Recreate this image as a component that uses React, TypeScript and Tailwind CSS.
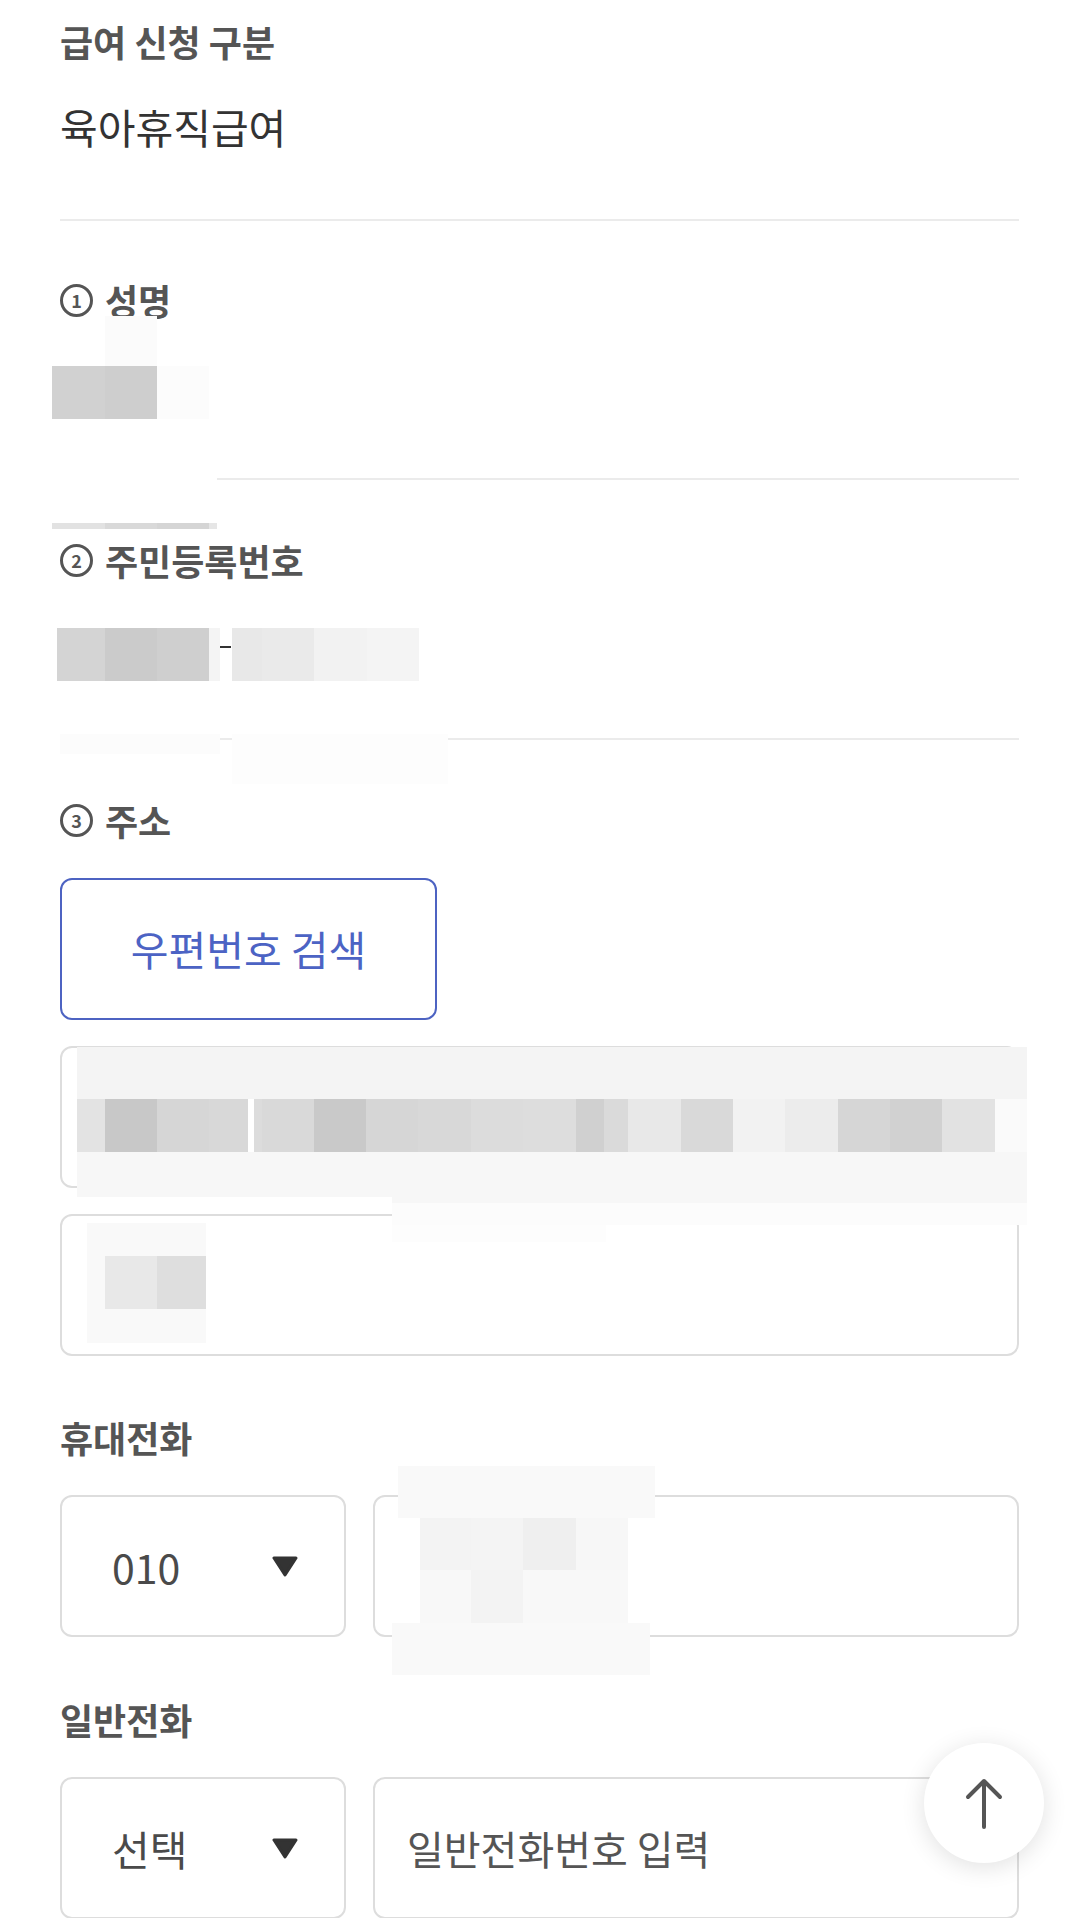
import React from "react";

const labelClass = "text-[36px] leading-[46px] font-bold text-[#555]";
const boxClass = "h-[142px] rounded-[12px] border-2 border-[#dddddd] bg-white";

// privacy mosaic laid over the filled-in values
const masks = [
	// 성명
	"left-[105px] top-[316px] w-[52px] h-[50px] bg-[#fbfbfb]",
	"left-[52px] top-[366px] w-[53px] h-[53px] bg-[#d1d1d1]",
	"left-[105px] top-[366px] w-[52px] h-[53px] bg-[#cecece]",
	"left-[157px] top-[366px] w-[52px] h-[53px] bg-[#fcfcfc]",
	"left-[52px] top-[468px] w-[165px] h-[52px] bg-white",
	"left-[52px] top-[523px] w-[53px] h-[6px] bg-[#e2e2e2]",
	"left-[105px] top-[523px] w-[52px] h-[6px] bg-[#d9d9d9]",
	"left-[157px] top-[523px] w-[52px] h-[6px] bg-[#d5d5d5]",
	"left-[209px] top-[523px] w-[8px] h-[6px] bg-[#e6e6e6]",
	// 주민등록번호
	"left-[57px] top-[628px] w-[48px] h-[53px] bg-[#d4d4d4]",
	"left-[105px] top-[628px] w-[52px] h-[53px] bg-[#cbcbcb]",
	"left-[157px] top-[628px] w-[52px] h-[53px] bg-[#cfcfcf]",
	"left-[209px] top-[628px] w-[11px] h-[53px] bg-[#f4f4f4]",
	"left-[220px] top-[646px] w-[11px] h-[2px] bg-[#333]",
	"left-[232px] top-[628px] w-[30px] h-[53px] bg-[#e8e8e8]",
	"left-[262px] top-[628px] w-[52px] h-[53px] bg-[#eaeaea]",
	"left-[314px] top-[628px] w-[53px] h-[53px] bg-[#f2f2f2]",
	"left-[367px] top-[628px] w-[52px] h-[53px] bg-[#f4f4f4]",
	"left-[60px] top-[734px] w-[160px] h-[20px] bg-[#fcfcfc]",
	"left-[232px] top-[734px] w-[216px] h-[50px] bg-[#fdfdfd]",
	// 주소 1
	"left-[77px] top-[1047px] w-[950px] h-[52px] bg-[#f4f4f4]",
	"left-[77px] top-[1099px] w-[28px] h-[53px] bg-[#e3e3e3]",
	"left-[105px] top-[1099px] w-[52px] h-[53px] bg-[#c8c8c8]",
	"left-[157px] top-[1099px] w-[52px] h-[53px] bg-[#d6d6d6]",
	"left-[209px] top-[1099px] w-[39px] h-[53px] bg-[#d8d8d8]",
	"left-[248px] top-[1099px] w-[6px] h-[53px] bg-white",
	"left-[254px] top-[1099px] w-[8px] h-[53px] bg-[#dcdcdc]",
	"left-[262px] top-[1099px] w-[52px] h-[53px] bg-[#d9d9d9]",
	"left-[314px] top-[1099px] w-[52px] h-[53px] bg-[#c9c9c9]",
	"left-[366px] top-[1099px] w-[52px] h-[53px] bg-[#d6d6d6]",
	"left-[418px] top-[1099px] w-[53px] h-[53px] bg-[#d8d8d8]",
	"left-[471px] top-[1099px] w-[52px] h-[53px] bg-[#dcdcdc]",
	"left-[523px] top-[1099px] w-[53px] h-[53px] bg-[#dddddd]",
	"left-[576px] top-[1099px] w-[28px] h-[53px] bg-[#d0d0d0]",
	"left-[604px] top-[1099px] w-[24px] h-[53px] bg-[#dadada]",
	"left-[628px] top-[1099px] w-[53px] h-[53px] bg-[#e8e8e8]",
	"left-[681px] top-[1099px] w-[52px] h-[53px] bg-[#d9d9d9]",
	"left-[733px] top-[1099px] w-[52px] h-[53px] bg-[#f2f2f2]",
	"left-[785px] top-[1099px] w-[53px] h-[53px] bg-[#ececec]",
	"left-[838px] top-[1099px] w-[52px] h-[53px] bg-[#d6d6d6]",
	"left-[890px] top-[1099px] w-[52px] h-[53px] bg-[#d1d1d1]",
	"left-[942px] top-[1099px] w-[53px] h-[53px] bg-[#e2e2e2]",
	"left-[995px] top-[1099px] w-[32px] h-[53px] bg-[#fafafa]",
	"left-[77px] top-[1152px] w-[950px] h-[45px] bg-[#f7f7f7]",
	"left-[392px] top-[1197px] w-[635px] h-[6px] bg-[#f7f7f7]",
	"left-[392px] top-[1203px] w-[635px] h-[22px] bg-[#fcfcfc]",
	"left-[392px] top-[1225px] w-[214px] h-[17px] bg-[#fdfdfd]",
	// 주소 2
	"left-[87px] top-[1223px] w-[119px] h-[120px] bg-[#f9f9f9]",
	"left-[105px] top-[1256px] w-[52px] h-[53px] bg-[#e8e8e8]",
	"left-[157px] top-[1256px] w-[49px] h-[53px] bg-[#dedede]",
	// 휴대전화
	"left-[398px] top-[1466px] w-[257px] h-[52px] bg-[#f9f9f9]",
	"left-[420px] top-[1518px] w-[51px] h-[52px] bg-[#f3f3f3]",
	"left-[471px] top-[1518px] w-[52px] h-[52px] bg-[#f4f4f4]",
	"left-[523px] top-[1518px] w-[53px] h-[52px] bg-[#efefef]",
	"left-[576px] top-[1518px] w-[52px] h-[52px] bg-[#f7f7f7]",
	"left-[420px] top-[1570px] w-[51px] h-[53px] bg-[#f8f8f8]",
	"left-[471px] top-[1570px] w-[52px] h-[53px] bg-[#f3f3f3]",
	"left-[523px] top-[1570px] w-[105px] h-[53px] bg-[#f8f8f8]",
	"left-[392px] top-[1623px] w-[258px] h-[52px] bg-[#f9f9f9]",
];

const Num = ({ n }: { n: number }) => (
	<span className="mr-[12px] inline-flex h-[33px] w-[33px] shrink-0 items-center justify-center rounded-full border-[3px] border-[#555] text-[18px] font-bold leading-none text-[#555]">
		{n}
	</span>
);

const Caret = () => (
	<svg width="26" height="21" viewBox="0 0 26 21">
		<polygon
			points="2,2 24,2 13,19"
			fill="#333"
			stroke="#333"
			strokeWidth="3"
			strokeLinejoin="round"
		/>
	</svg>
);

const PhoneRow = ({
	prefix,
	value,
}: {
	prefix: string;
	value?: string;
}) => (
	<div className="mt-[35px] flex gap-[27px]">
		<div
			className={`${boxClass} flex w-[286px] shrink-0 items-center justify-between pl-[50px] pr-[46px]`}
		>
			<span className="text-[41px] leading-none text-[#4a4a4a]">{prefix}</span>
			<Caret />
		</div>
		<div className={`${boxClass} flex flex-1 items-center pl-[32px]`}>
			{value && (
				<span className="text-[40px] leading-none text-[#555]">{value}</span>
			)}
		</div>
	</div>
);

export default function App() {
	return (
		<div className="relative h-[1918px] overflow-hidden bg-white font-['Noto_Sans_CJK_KR','Noto_Sans',sans-serif]">
			<div className="px-[60px] pt-[18px]">
				<p className={labelClass}>급여 신청 구분</p>
				<p className="mt-[36px] text-[41px] leading-[52px] text-[#333]">
					육아휴직급여
				</p>
				<div className="mt-[67px] h-[2px] bg-[#ebebeb]" />

				<p className={`${labelClass} mt-[56px] flex items-center`}>
					<Num n={1} />
					성명
				</p>
				<div className="mt-[44px] h-[52px]" />
				<div className="mt-[59px] h-[2px] bg-[#ebebeb]" />

				<p className={`${labelClass} mt-[57px] flex items-center`}>
					<Num n={2} />
					주민등록번호
				</p>
				<div className="mt-[45px] h-[52px]" />
				<div className="mt-[58px] h-[2px] bg-[#ebebeb]" />

				<p className={`${labelClass} mt-[57px] flex items-center`}>
					<Num n={3} />
					주소
				</p>
				<button className="mt-[35px] flex h-[142px] w-[377px] items-center justify-center rounded-[12px] border-2 border-[#4d63c2] bg-white text-[41px] text-[#4c63c4]">
					우편번호 검색
				</button>
				<div className={`${boxClass} mt-[26px] bg-[#f6f6f6]`} />
				<div className={`${boxClass} mt-[26px]`} />

				<p className={`${labelClass} mt-[58px]`}>휴대전화</p>
				<PhoneRow prefix="010" />

				<p className={`${labelClass} mt-[59px]`}>일반전화</p>
				<PhoneRow prefix="선택" value="일반전화번호 입력" />
			</div>

			{masks.map((m, i) => (
				<div key={i} className={`absolute ${m}`} />
			))}

			<button className="absolute left-[924px] top-[1743px] flex h-[120px] w-[120px] items-center justify-center rounded-full bg-white shadow-[0_4px_24px_rgba(0,0,0,0.12)]">
				<svg width="40" height="52" viewBox="0 0 40 52" fill="none">
					<path
						d="M20 4V50M4 20L20 4L36 20"
						stroke="#555"
						strokeWidth="4"
						strokeLinecap="round"
						strokeLinejoin="round"
					/>
				</svg>
			</button>
		</div>
	);
}
